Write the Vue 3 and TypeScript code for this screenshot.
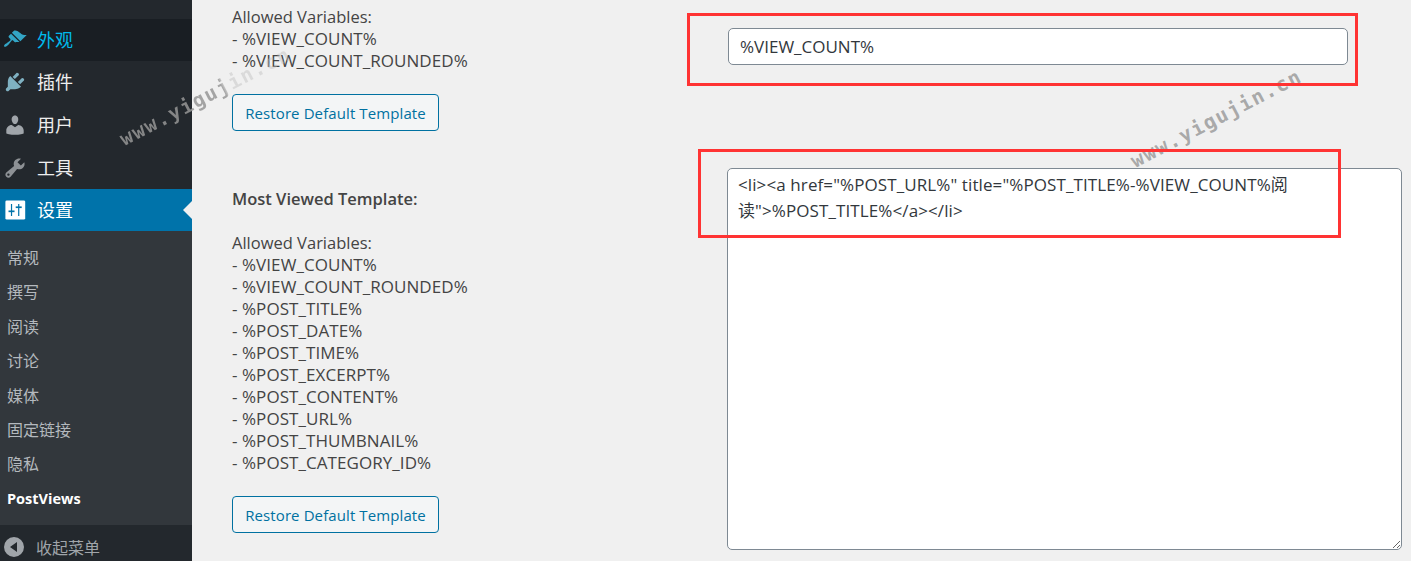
<script setup lang="ts">
const topItems = [
  { label: '插件', d: 'M13.11 4.36L9.87 7.6 8 5.73l3.24-3.24c.35-.34 1.05-.2 1.56.32.52.51.66 1.21.31 1.55zm-8 1.77l.91-1.12 9.01 9.01-1.19.84c-.71.71-2.63 1.16-3.82 1.16H6.14L4.9 17.26c-.59.59-1.54.59-2.12 0-.59-.58-.59-1.53 0-2.12l1.24-1.24v-3.88c0-1.13.4-3.19 1.09-3.89zm7.26 3.97l3.24-3.24c.34-.35 1.04-.21 1.55.31.52.51.66 1.21.31 1.55l-3.24 3.25z', cls: 'plug' },
  { label: '用户', d: 'M10 9.25c-2.27 0-2.73-3.44-2.73-3.44C7 4.02 7.82 2 9.97 2c2.16 0 2.98 2.02 2.71 3.81 0 0-.41 3.44-2.68 3.44zm0 2.57L12.72 10c2.39 0 4.52 2.33 4.52 4.53v2.49s-3.65 1.13-7.24 1.13c-3.65 0-7.24-1.13-7.24-1.13v-2.49c0-2.25 1.94-4.48 4.47-4.48z', cls: 'user' },
  { label: '工具', d: 'M16.68 9.77c-1.34 1.34-3.3 1.67-4.95.99l-5.41 6.52c-.99.99-2.59.99-3.58 0s-.99-2.59 0-3.57l6.52-5.42c-.68-1.65-.35-3.61.99-4.95 1.28-1.28 3.12-1.62 4.72-1.06l-2.89 2.89 2.82 2.82 2.86-2.87c.53 1.58.18 3.39-1.08 4.65zM3.81 16.21c.4.39 1.04.39 1.43 0 .4-.4.4-1.04 0-1.43-.39-.4-1.03-.4-1.43 0-.39.39-.39 1.03 0 1.43z', cls: 'tool' },
]
const subItems = ['常规', '撰写', '阅读', '讨论', '媒体', '固定链接', '隐私']
const shortVars = ['- %VIEW_COUNT%', '- %VIEW_COUNT_ROUNDED%']
const longVars = [
  ...shortVars,
  '- %POST_TITLE%',
  '- %POST_DATE%',
  '- %POST_TIME%',
  '- %POST_EXCERPT%',
  '- %POST_CONTENT%',
  '- %POST_URL%',
  '- %POST_THUMBNAIL%',
  '- %POST_CATEGORY_ID%',
]
const templateValue = '<li><a href="%POST_URL%" title="%POST_TITLE%-%VIEW_COUNT%阅\n读">%POST_TITLE%</a></li>'
</script>

<template>
  <div class="page">
    <aside class="sidebar">
      <div class="menu-item appearance">
        <svg class="icon" viewBox="0 0 20 20"><path d="M14.48 11.06L7.41 3.99l1.5-1.5c.5-.56 2.3-.47 3.51.32 1.21.8 1.43 1.28 2.91 2.1 1.18.64 2.45 1.26 4.45.85zm-.71.71L6.7 4.7 4.93 6.47c-.39.39-.39 1.02 0 1.41l1.06 1.06c.39.39.39 1.03 0 1.42-.6.6-1.43 1.11-2.21 1.69-.35.26-.7.53-1.01.84C1.43 13.23.4 14.89 1.02 15.5c.61.62 2.27-.41 3.61-1.75.31-.31.58-.66.84-1.01.58-.78 1.09-1.61 1.69-2.21.39-.39 1.02-.39 1.41 0l1.06 1.06c.39.39 1.02.39 1.41 0z" /></svg>
        <span>外观</span>
      </div>
      <div v-for="item in topItems" :key="item.label" class="menu-item" :class="item.cls">
        <svg class="icon" viewBox="0 0 20 20"><path :d="item.d" /></svg>
        <span>{{ item.label }}</span>
      </div>
      <div class="menu-item current">
        <svg class="icon" viewBox="0 0 20 20">
          <rect x="2" y="2" width="16.5" height="16" rx="1.2" fill="#fff" />
          <rect x="6.6" y="5" width="1" height="10" fill="#0073aa" />
          <rect x="4.6" y="10.4" width="5" height="1.4" fill="#0073aa" />
          <rect x="12.6" y="5" width="1" height="10" fill="#0073aa" />
          <rect x="10.6" y="7" width="5" height="1.4" fill="#0073aa" />
        </svg>
        <span>设置</span>
        <i class="pointer"></i>
      </div>
      <ul class="submenu">
        <li v-for="s in subItems" :key="s">{{ s }}</li>
        <li class="active">PostViews</li>
      </ul>
      <div class="collapse">
        <svg class="collapse-icon" viewBox="0 0 20 20">
          <path d="M10 0a10 10 0 1 0 0 20a10 10 0 0 0 0-20zM13 5v10L6 10z" fill-rule="evenodd" />
        </svg>
        <span>收起菜单</span>
      </div>
    </aside>

    <main class="content">
      <section class="labels">
        <div class="var-list">
          <div>Allowed Variables:</div>
          <div v-for="v in shortVars" :key="v" class="var">{{ v }}</div>
        </div>
        <button class="restore first" type="button">Restore Default Template</button>
        <div class="heading">Most Viewed Template:</div>
        <div class="var-list">
          <div>Allowed Variables:</div>
          <div v-for="v in longVars" :key="v" class="var">{{ v }}</div>
        </div>
        <button class="restore" type="button">Restore Default Template</button>
      </section>
      <section class="fields">
        <input class="text-field" type="text" value="%VIEW_COUNT%" readonly />
        <textarea class="area-field" :value="templateValue" readonly></textarea>
      </section>
    </main>

    <div class="mark mark-one">www.yigujin.cn</div>
    <div class="mark mark-two">www.yigujin.cn</div>
    <div class="callout callout-one"></div>
    <div class="callout callout-two"></div>
  </div>
</template>

<style scoped>
.page {
  position: relative;
  display: flex;
  width: 1411px;
  height: 561px;
  overflow: hidden;
  background: #f0f0f0;
  font-family: "Open Sans", "Noto Sans CJK SC", sans-serif;
  color: #444;
}
.sidebar {
  display: flex;
  flex-direction: column;
  flex: none;
  width: 192px;
  padding-top: 19px;
  box-sizing: border-box;
  background: #23282d;
}
.menu-item {
  position: relative;
  display: flex;
  flex: none;
  align-items: center;
  height: 42.67px;
  padding-left: 3px;
  gap: 10px;
  box-sizing: border-box;
  color: #eee;
  font-size: 18px;
}
.menu-item span {
  margin-top: -2px;
}
.icon {
  flex: none;
  width: 24px;
  height: 24px;
  fill: #9ea3a8;
}
.appearance {
  height: 42px;
  background: #191e23;
  color: #00b9eb;
}
.appearance .icon { fill: #33a5c5; }
.plug .icon { fill: #7fb1c2; }
.user .icon { fill: #a0a5aa; }
.tool .icon { fill: #8d9195; }
.current {
  height: 42px;
  background: #0073aa;
  color: #fff;
}
.pointer {
  position: absolute;
  right: 0;
  top: 12px;
  border: 9px solid transparent;
  border-right-color: #f0f0f0;
  border-left-width: 0;
}
.submenu {
  flex: none;
  height: 294px;
  margin: 0;
  padding: 10px 0 9px;
  box-sizing: border-box;
  list-style: none;
  background: #32373c;
  color: #b4b9be;
  font-size: 16px;
}
.submenu li {
  height: 34.4px;
  line-height: 34.4px;
  padding-left: 7px;
}
.submenu .active {
  color: #fff;
  font-size: 14.5px;
  font-weight: 700;
}
.collapse {
  display: flex;
  align-items: center;
  flex: none;
  gap: 12px;
  height: 44px;
  padding-left: 4px;
  color: #a0a5aa;
  font-size: 16px;
}
.collapse-icon {
  flex: none;
  width: 20px;
  height: 20px;
  fill: #a0a5aa;
}
.content {
  display: flex;
  flex: 1;
  padding-left: 40px;
}
.labels {
  flex: none;
  width: 495px;
  padding-top: 6px;
  font-size: 16.5px;
  line-height: 22px;
}
.var {
  font-size: 17px;
  letter-spacing: 0.06px;
}
.heading {
  margin-top: 57px;
  margin-bottom: 22px;
  font-weight: 600;
}
.restore {
  display: block;
  width: 207px;
  height: 37px;
  margin-top: 22px;
  padding: 0;
  border: 1px solid #0071a1;
  border-radius: 4px;
  background: #f3f5f6;
  color: #0071a1;
  font: inherit;
  font-size: 15px;
  letter-spacing: 0.1px;
}
.fields {
  flex: 1;
  padding-top: 28px;
}
.text-field {
  display: block;
  width: 620px;
  height: 37px;
  margin-left: 1px;
  padding: 0 11px;
  box-sizing: border-box;
  border: 1px solid #7e8993;
  border-radius: 5px;
  background: #fff;
  color: #32373c;
  font: inherit;
  font-size: 17px;
  outline: none;
}
.area-field {
  display: block;
  width: 675px;
  height: 382px;
  margin-top: 103px;
  padding: 3px 10px;
  box-sizing: border-box;
  border: 1px solid #7e8993;
  border-radius: 5px;
  background: #fff;
  color: #32373c;
  font: inherit;
  font-size: 17px;
  letter-spacing: 0.1px;
  line-height: 25.6px;
  outline: none;
}
.mark {
  position: absolute;
  color: rgba(150, 150, 150, 0.8);
  font-family: "DejaVu Sans Mono", monospace;
  font-size: 20px;
  font-weight: 700;
  letter-spacing: 1.5px;
  white-space: nowrap;
  transform-origin: left center;
  transform: rotate(-27.5deg);
  pointer-events: none;
}
.mark-one {
  left: 121px;
  top: 128px;
  color: transparent;
  background: linear-gradient(90deg, rgba(150, 150, 150, 0.85) 60%, rgba(190, 190, 190, 0.45) 62%);
  -webkit-background-clip: text;
  background-clip: text;
}
.mark-two { left: 1132px; top: 150px; }
.callout {
  position: absolute;
  box-sizing: border-box;
  border: 3px solid #f33;
  pointer-events: none;
}
.callout-one { left: 687px; top: 13px; width: 671px; height: 73px; }
.callout-two { left: 698px; top: 149px; width: 643px; height: 89px; }
</style>
